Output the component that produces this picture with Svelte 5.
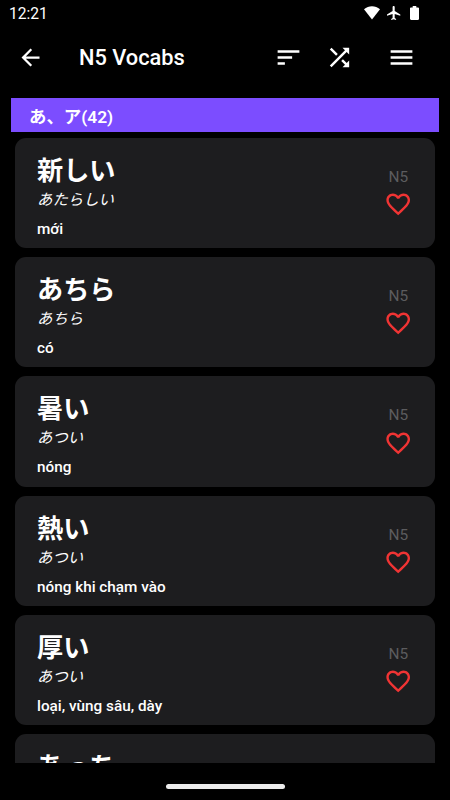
<script lang="ts">
  type Vocab = { word: string; reading: string; meaning: string };

  const level = 'N5';
  const vocabs: Vocab[] = [
    { word: '新しい', reading: 'あたらしい', meaning: 'mới' },
    { word: 'あちら', reading: 'あちら', meaning: 'có' },
    { word: '暑い', reading: 'あつい', meaning: 'nóng' },
    { word: '熱い', reading: 'あつい', meaning: 'nóng khi chạm vào' },
    { word: '厚い', reading: 'あつい', meaning: 'loại, vùng sâu, dày' },
    { word: 'あっち', reading: 'あっち', meaning: 'ở đó' }
  ];

  let favorites = $state<number[]>([]);

  function toggleFavorite(index: number) {
    favorites = favorites.includes(index)
      ? favorites.filter((i) => i !== index)
      : [...favorites, index];
  }
</script>

<div class="screen">
  <div class="status-bar">
    <span class="time">12:21</span>
    <div class="status-icons">
      <svg class="wifi" viewBox="0 0 16 14"><path d="M0 3.2C4.6-.9 11.4-.9 16 3.2L8 13.4z" /></svg>
      <svg class="plane" viewBox="2 2 20 20">
        <path d="M21 16v-2l-8-5V3.500c0-.83-.67-1.500-1.500-1.500S10 2.670 10 3.500V9l-8 5v2l8-2.500V19l-2 1.500V22l3.500-1 3.500 1v-1.500L13 19v-5.500l8 2.500z" />
      </svg>
      <svg class="battery" viewBox="7 2 10 20" preserveAspectRatio="none">
        <path d="M15.670 4H14V2h-4v2H8.330C7.600 4 7 4.600 7 5.330v15.330C7 21.400 7.600 22 8.330 22h7.330c.74 0 1.340-.6 1.340-1.330V5.330C17 4.600 16.400 4 15.670 4z" />
      </svg>
    </div>
  </div>

  <header class="app-bar">
    <button class="icon-button back" aria-label="Back">
      <svg viewBox="0 0 24 24"><path d="M20 11H7.830l5.590-5.590L12 4l-8 8 8 8 1.410-1.410L7.830 13H20v-2z" /></svg>
    </button>
    <h1>N5 Vocabs</h1>
    <div class="actions">
      <button class="icon-button" aria-label="Sort">
        <svg viewBox="0 0 24 24"><path d="M3 18h6v-2H3v2zM3 6v2h18V6H3zm0 7h12v-2H3v2z" /></svg>
      </button>
      <button class="icon-button" aria-label="Shuffle">
        <svg viewBox="0 0 24 24">
          <path d="M10.590 9.170L5.410 4 4 5.410l5.170 5.170 1.420-1.410zM14.500 4l2.040 2.040L4 18.590 5.410 20 17.960 7.460 20 9.500V4h-5.500zm.33 9.410l-1.410 1.410 3.130 3.130L14.500 20H20v-5.500l-2.040 2.040-3.130-3.130z" />
        </svg>
      </button>
      <button class="icon-button menu" aria-label="Menu">
        <svg viewBox="0 0 24 24"><path d="M3 18h18v-2H3v2zm0-5h18v-2H3v2zm0-7v2h18V6H3z" /></svg>
      </button>
    </div>
  </header>

  <main class="content">
    <h2 class="section-title">あ、ア(42)</h2>

    <div class="list">
      {#each vocabs as vocab, index}
        <article class="card">
          <div class="text">
            <div class="word">{vocab.word}</div>
            <div class="reading">{vocab.reading}</div>
            <div class="meaning">{vocab.meaning}</div>
          </div>
          <div class="side">
            <span class="level">{level}</span>
            <button
              class="icon-button heart"
              class:active={favorites.includes(index)}
              aria-label="Favorite"
              onclick={() => toggleFavorite(index)}
            >
              <svg viewBox="0 0 24 24">
                <path d="M16.500 3c-1.740 0-3.410.81-4.500 2.090C10.910 3.810 9.240 3 7.500 3 4.420 3 2 5.420 2 8.500c0 3.780 3.400 6.860 8.550 11.540L12 21.350l1.450-1.320C18.600 15.360 22 12.280 22 8.500 22 5.420 19.580 3 16.500 3zm-4.400 15.550l-.1.1-.1-.1C7.140 14.240 4 11.390 4 8.500 4 6.500 5.500 5 7.500 5c1.540 0 3.040.99 3.570 2.360h1.870C13.460 5.990 14.960 5 16.500 5c2 0 3.500 1.500 3.500 3.500 0 2.890-3.140 5.740-7.900 10.050z" />
              </svg>
            </button>
          </div>
        </article>
      {/each}
    </div>
  </main>

  <div class="nav-bar"><div class="handle"></div></div>
</div>

<style>
  :global(body) {
    background: #000;
  }

  .screen {
    display: flex;
    flex-direction: column;
    height: 100vh;
    overflow: hidden;
    background: #000;
    color: #fff;
    font-family: Roboto, "Noto Sans CJK JP", sans-serif;
  }

  svg {
    display: block;
    fill: currentColor;
  }

  .status-bar {
    flex: none;
    display: flex;
    justify-content: space-between;
    height: 27px;
    padding: 0 30px 0 9px;
    box-sizing: border-box;
  }

  .time {
    font-size: 15.6px;
    line-height: 29px;
  }

  .status-icons {
    display: flex;
    align-items: flex-start;
    padding-top: 6px;
  }

  .wifi {
    width: 16px;
    height: 14px;
  }

  .plane {
    width: 14px;
    height: 14px;
    margin-left: 7px;
  }

  .battery {
    width: 9px;
    height: 14px;
    margin: 0 1px 0 9px;
  }

  .app-bar {
    flex: none;
    display: flex;
    align-items: center;
    height: 60px;
    padding: 0 34px 0 17px;
  }

  .icon-button {
    padding: 0;
    border: none;
    background: none;
    color: inherit;
    cursor: pointer;
  }

  .icon-button svg {
    width: 29px;
    height: 29px;
  }

  .icon-button.back svg {
    width: 27px;
    height: 27px;
  }

  h1 {
    margin: 1px 0 0 35px;
    font-size: 21.8px;
    font-weight: 500;
    line-height: 30px;
  }

  .actions {
    display: flex;
    margin-left: auto;
    gap: 22px;
  }

  .actions .menu {
    margin-left: 11px;
  }

  .content {
    flex: 1;
    min-height: 0;
    overflow: hidden;
    padding: 11px 11px 0;
  }

  .section-title {
    height: 33.5px;
    margin: 0;
    padding-left: 18px;
    background: #7c4dff;
    font-size: 17.4px;
    font-weight: 600;
    line-height: 38px;
  }

  .list {
    display: flex;
    flex-direction: column;
    gap: 9px;
    padding: 6.300px 4.400px 0 4px;
  }

  .card {
    flex: none;
    display: flex;
    justify-content: space-between;
    height: 110.25px;
    padding: 0 22px;
    box-sizing: border-box;
    border-radius: 11px;
    background: #1d1d1f;
  }

  .word {
    padding-top: 14px;
    font-size: 26.2px;
    font-weight: 700;
    line-height: 38px;
  }

  .reading {
    margin-top: -1px;
    font-size: 15.4px;
    font-style: italic;
    line-height: 22px;
  }

  .meaning {
    margin-top: 7px;
    font-size: 15.3px;
    font-weight: 500;
    line-height: 22px;
  }

  .side {
    display: flex;
    flex-direction: column;
    align-items: center;
    padding-top: 28px;
  }

  .level {
    color: #5c5c5e;
    font-size: 15.4px;
    line-height: 22px;
  }

  .heart {
    margin-top: 2.3px;
    color: #f03434;
  }

  .heart svg {
    width: 28.4px;
    height: 28.4px;
  }

  .heart.active path {
    stroke: currentColor;
    stroke-width: 2;
  }

  .nav-bar {
    flex: none;
    display: flex;
    justify-content: center;
    height: 37px;
    padding-top: 21px;
    box-sizing: border-box;
  }

  .handle {
    width: 119px;
    height: 5px;
    border-radius: 3px;
    background: #ececec;
  }
</style>
